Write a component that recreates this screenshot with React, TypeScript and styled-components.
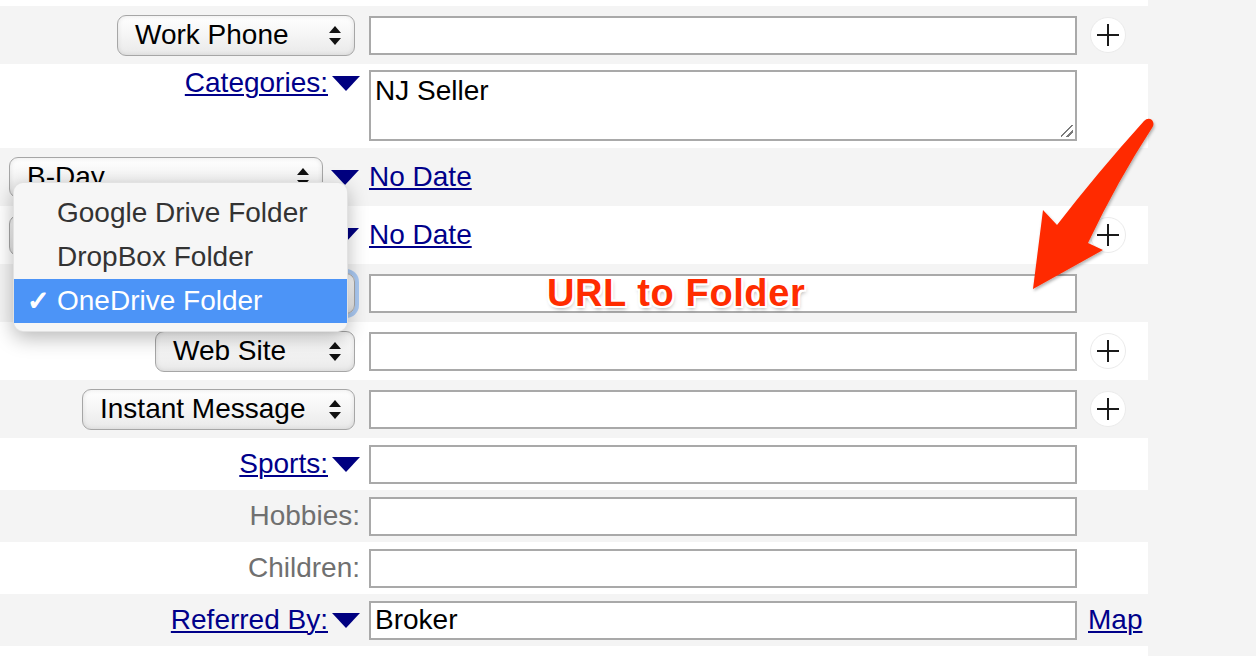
import React from "react";
import styled, { createGlobalStyle } from "styled-components";

const GlobalStyle = createGlobalStyle`
  html, body { margin: 0; padding: 0; background: #f4f4f4; }
  body {
    font-family: "Liberation Sans", Arial, Helvetica, sans-serif;
    width: 1256px;
    height: 656px;
    overflow: hidden;
  }
  * { box-sizing: border-box; }
`;

const Stage = styled.div`
  position: relative;
  width: 1256px;
  height: 656px;
  overflow: hidden;
  background: #f4f4f4;
`;

const Form = styled.div`
  width: 1148px;
  display: flex;
  flex-direction: column;
`;

const Row = styled.div<{ $tone: "white" | "gray"; $h: number; $top?: boolean }>`
  height: ${(p) => p.$h}px;
  background: ${(p) => (p.$tone === "white" ? "#ffffff" : "#f4f4f4")};
  display: grid;
  grid-template-columns: 360px 708px auto;
  column-gap: 9px;
  align-items: ${(p) => (p.$top ? "start" : "center")};
  padding-top: ${(p) => (p.$top ? "6px" : "0")};
`;

const Spacer = styled.div<{ $h: number }>`
  height: ${(p) => p.$h}px;
  background: #ffffff;
`;

const LabelCell = styled.div<{ $gap?: number; $pr?: number }>`
  display: flex;
  justify-content: flex-end;
  align-items: center;
  gap: ${(p) => p.$gap ?? 4}px;
  padding-right: ${(p) => p.$pr ?? 0}px;
  font-size: 28px;
  line-height: 26px;
`;

const FieldLink = styled.a`
  color: #00008a;
  text-decoration: underline;
  text-decoration-thickness: 2px;
  text-underline-offset: 2px;
  font-size: 28px;
  line-height: 26px;
  cursor: pointer;
`;

const PlainLabel = styled.span`
  color: #707070;
  font-size: 28px;
  line-height: 26px;
`;

const SelectBox = styled.div<{ $w: number; $focus?: boolean }>`
  width: ${(p) => p.$w}px;
  height: 41px;
  display: flex;
  align-items: center;
  justify-content: space-between;
  padding: 0 13px 0 17px;
  border: 1px solid #a6a6a6;
  border-radius: 9px;
  background: linear-gradient(#ffffff 0%, #f6f6f6 45%, #e9e9e9 100%);
  box-shadow: inset 0 0 5px rgba(0, 0, 0, 0.1)
    ${(p) => (p.$focus ? ", 0 0 0 4px rgba(110, 165, 240, 0.55)" : "")};
  font-size: 28px;
  color: #000;
  white-space: nowrap;
`;

const SelectText = styled.span`
  line-height: 30px;
`;

const UpDown = () => (
  <svg width="12" height="19" viewBox="0 0 12 19">
    <polygon points="0,7 6,0 12,7" fill="#111" />
    <polygon points="0,12 12,12 6,19" fill="#111" />
  </svg>
);

const DownTriangle = () => (
  <svg width="28" height="15" viewBox="0 0 28 15">
    <polygon points="0,0 28,0 14,15" fill="#000080" />
  </svg>
);

const TextInput = styled.input`
  width: 708px;
  height: 39px;
  border: 2px solid #a9a9a9;
  border-radius: 0;
  background: #fff;
  font: 28px "Liberation Sans", Arial, sans-serif;
  color: #000;
  padding: 0 4px;
  outline: none;
`;

const AreaWrap = styled.div`
  position: relative;
  width: 708px;
  height: 71px;
  &::after {
    content: "";
    position: absolute;
    right: 4px;
    bottom: 4px;
    width: 12px;
    height: 12px;
    background: linear-gradient(
      135deg,
      transparent 42%,
      #7a7a7a 42%,
      #7a7a7a 52%,
      transparent 52%,
      transparent 70%,
      #7a7a7a 70%,
      #7a7a7a 80%,
      transparent 80%
    );
  }
`;

const TextArea = styled.textarea`
  width: 708px;
  height: 71px;
  border: 2px solid #a9a9a9;
  border-radius: 0;
  background: #fff;
  font: 28px "Liberation Sans", Arial, sans-serif;
  color: #000;
  padding: 3px 4px;
  resize: none;
  outline: none;
  display: block;
`;

const Extra = styled.div`
  display: flex;
  align-items: center;
`;

const PlusButton = styled.div`
  margin-left: 4px;
  width: 36px;
  height: 36px;
  border-radius: 50%;
  border: 1px solid #ebebeb;
  background: #fff;
  display: flex;
  align-items: center;
  justify-content: center;
`;

const PlusIcon = () => (
  <svg width="24" height="24" viewBox="0 0 24 24">
    <path d="M12 1v22M1 12h22" stroke="#1a1a1a" strokeWidth="2" fill="none" />
  </svg>
);

const MapLink = styled(FieldLink)`
  margin-left: 2px;
`;

const DateLink = styled(FieldLink)`
  justify-self: start;
`;

const Menu = styled.div`
  position: absolute;
  left: 13px;
  top: 182px;
  width: 335px;
  padding: 8px 0;
  border-radius: 10px;
  background: #f6f6f6;
  border: 1px solid rgba(0, 0, 0, 0.08);
  box-shadow: 0 6px 20px rgba(0, 0, 0, 0.28);
  font-size: 28px;
`;

const MenuItem = styled.div<{ $active?: boolean }>`
  height: 44px;
  display: grid;
  grid-template-columns: 30px 1fr;
  align-items: center;
  padding-left: 13px;
  background: ${(p) => (p.$active ? "#4c94f7" : "transparent")};
  color: ${(p) => (p.$active ? "#fff" : "#333")};
  white-space: nowrap;
`;

const Check = styled.span`
  font-family: "DejaVu Sans", sans-serif;
  font-size: 27px;
  line-height: 30px;
  -webkit-text-stroke: 1.2px #fff;
`;

const Callout = styled.div`
  position: absolute;
  left: 547px;
  top: 274px;
  font-size: 38px;
  line-height: 38px;
  letter-spacing: 0.6px;
  font-weight: bold;
  color: #ff2c00;
  white-space: nowrap;
  text-shadow: -2px -2px 0 #fff, 2px -2px 0 #fff, -2px 2px 0 #fff, 2px 2px 0 #fff,
    0 -2px 0 #fff, 0 2px 0 #fff, -2px 0 0 #fff, 2px 0 0 #fff,
    1px 3px 4px rgba(0, 0, 0, 0.35);
`;

const ArrowLayer = styled.svg`
  position: absolute;
  left: 0;
  top: 0;
  pointer-events: none;
`;

type SelectProps = { w: number; text?: string; focus?: boolean };
const Select = ({ w, text, focus }: SelectProps) => (
  <SelectBox $w={w} $focus={focus}>
    <SelectText>{text ?? ""}</SelectText>
    <UpDown />
  </SelectBox>
);

const Plus = () => (
  <Extra>
    <PlusButton>
      <PlusIcon />
    </PlusButton>
  </Extra>
);

export default function App() {
  return (
    <>
      <GlobalStyle />
      <Stage>
        <Form>
          <Spacer $h={6} />
          <Row $tone="gray" $h={58}>
            <LabelCell $pr={5}>
              <Select w={238} text="Work Phone" />
            </LabelCell>
            <TextInput />
            <Plus />
          </Row>
          <Row $tone="white" $h={84} $top>
            <LabelCell $gap={4}>
              <FieldLink>Categories:</FieldLink>
              <DownTriangle />
            </LabelCell>
            <AreaWrap>
              <TextArea defaultValue="NJ Seller" />
            </AreaWrap>
            <Extra />
          </Row>
          <Row $tone="gray" $h={58}>
            <LabelCell $gap={8} $pr={1}>
              <Select w={314} text="B-Day" />
              <DownTriangle />
            </LabelCell>
            <DateLink>No Date</DateLink>
            <Extra />
          </Row>
          <Row $tone="white" $h={58}>
            <LabelCell $gap={8} $pr={1}>
              <Select w={314} />
              <DownTriangle />
            </LabelCell>
            <DateLink>No Date</DateLink>
            <Plus />
          </Row>
          <Row $tone="gray" $h={58}>
            <LabelCell $pr={5}>
              <Select w={315} focus />
            </LabelCell>
            <TextInput />
            <Extra />
          </Row>
          <Row $tone="white" $h={58}>
            <LabelCell $pr={5}>
              <Select w={200} text="Web Site" />
            </LabelCell>
            <TextInput />
            <Plus />
          </Row>
          <Row $tone="gray" $h={58}>
            <LabelCell $pr={5}>
              <Select w={273} text="Instant Message" />
            </LabelCell>
            <TextInput />
            <Plus />
          </Row>
          <Row $tone="white" $h={52}>
            <LabelCell $gap={4}>
              <FieldLink>Sports:</FieldLink>
              <DownTriangle />
            </LabelCell>
            <TextInput />
            <Extra />
          </Row>
          <Row $tone="gray" $h={52}>
            <LabelCell>
              <PlainLabel>Hobbies:</PlainLabel>
            </LabelCell>
            <TextInput />
            <Extra />
          </Row>
          <Row $tone="white" $h={52}>
            <LabelCell>
              <PlainLabel>Children:</PlainLabel>
            </LabelCell>
            <TextInput />
            <Extra />
          </Row>
          <Row $tone="gray" $h={52}>
            <LabelCell $gap={4}>
              <FieldLink>Referred By:</FieldLink>
              <DownTriangle />
            </LabelCell>
            <TextInput defaultValue="Broker" />
            <Extra>
              <MapLink>Map</MapLink>
            </Extra>
          </Row>
          <Spacer $h={10} />
        </Form>

        <Menu>
          <MenuItem>
            <span />
            <span>Google Drive Folder</span>
          </MenuItem>
          <MenuItem>
            <span />
            <span>DropBox Folder</span>
          </MenuItem>
          <MenuItem $active>
            <Check>✓</Check>
            <span>OneDrive Folder</span>
          </MenuItem>
        </Menu>

        <Callout>URL to Folder</Callout>

        <ArrowLayer width="1256" height="656" viewBox="0 0 1256 656">
          <defs>
            <filter id="arrowShadow" x="-20%" y="-20%" width="140%" height="140%">
              <feDropShadow dx="1" dy="2" stdDeviation="1.5" floodColor="#000" floodOpacity="0.3" />
            </filter>
          </defs>
          <path
            d="M1144 121 Q1148 117 1152 120 Q1155 124 1152 128 Q1118 180 1088 243 L1103 250 L1033 289 L1043 210 L1057 225 Q1098 172 1144 121 Z"
            fill="#ff2b06"
            filter="url(#arrowShadow)"
          />
        </ArrowLayer>
      </Stage>
    </>
  );
}
